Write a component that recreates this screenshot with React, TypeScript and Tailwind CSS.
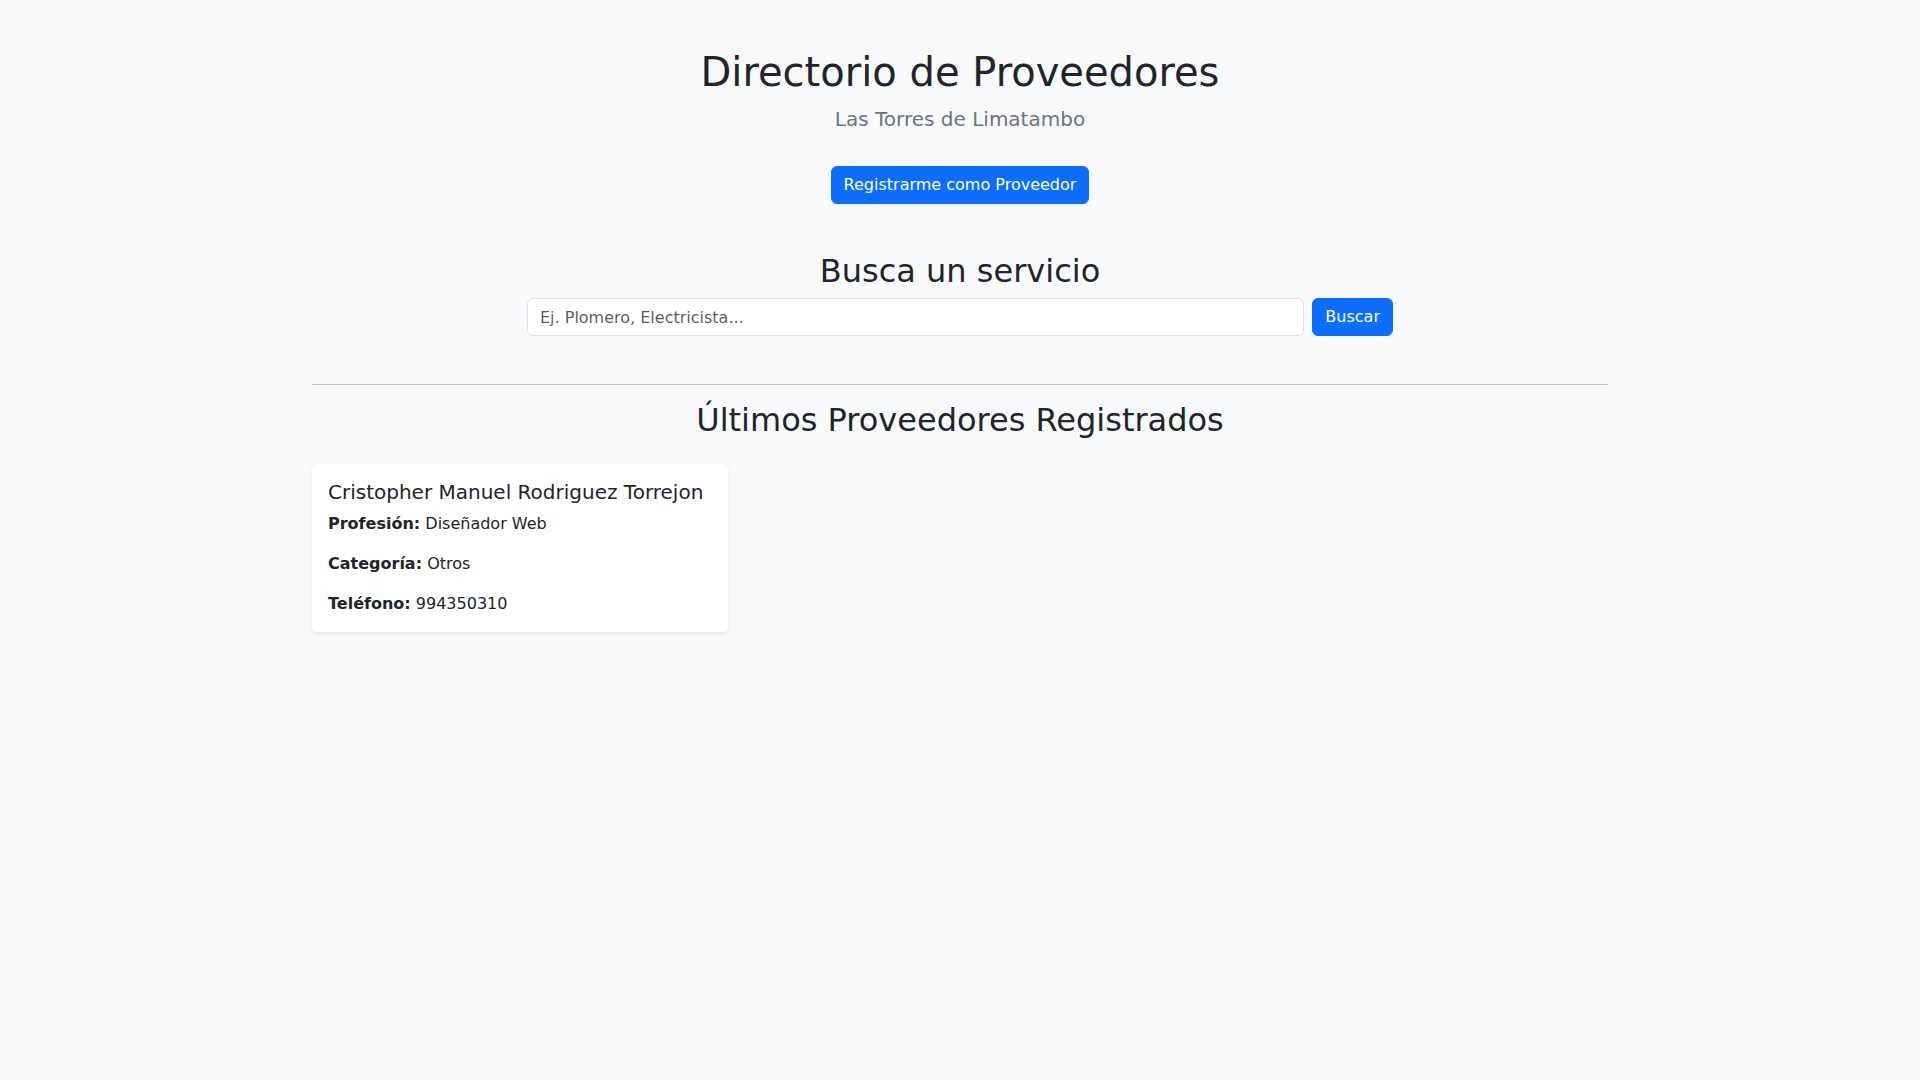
export default function App() {
  return (
    <div className="min-h-screen bg-[#f8f9fa] text-[#212529] font-['DejaVu_Sans',sans-serif] text-base leading-6">
      <div className="mx-auto max-w-[1320px] px-3 pt-12">
        <header className="text-center">
          <h1 className="text-[40px] leading-[1.2] font-medium mb-2">Directorio de Proveedores</h1>
          <p className="text-[20px] leading-[1.5] font-normal text-[#6c757d] mb-8">Las Torres de Limatambo</p>
          <button className="inline-block rounded-[6px] border border-[#0d6efd] bg-[#0d6efd] px-3 py-1.5 text-base leading-6 text-white">
            Registrarme como Proveedor
          </button>
        </header>

        <section className="mt-12 text-center">
          <h2 className="text-[32px] leading-[1.2] font-medium mb-2">Busca un servicio</h2>
          <form className="mx-auto mb-12 flex w-[866px] gap-2">
            <input
              type="text"
              placeholder="Ej. Plomero, Electricista..."
              className="h-[38px] flex-1 rounded-[6px] border border-[#dee2e6] bg-white px-3 py-1.5 text-base leading-6 outline-none placeholder:text-[#212529bf]"
            />
            <button
              type="button"
              className="h-[38px] rounded-[6px] border border-[#0d6efd] bg-[#0d6efd] px-3 text-base leading-6 text-white"
            >
              Buscar
            </button>
          </form>
        </section>

        <hr className="mb-4 border-t border-[#212529]/25" />

        <h2 className="text-center text-[32px] leading-[1.2] font-medium mb-6">Últimos Proveedores Registrados</h2>

        <div className="grid grid-cols-3 gap-6">
          <div className="rounded-[6px] bg-white p-4 shadow-[0_2px_4px_rgba(0,0,0,0.075)]">
            <h5 className="text-[20px] leading-[1.2] font-medium mb-2">Cristopher Manuel Rodriguez Torrejon</h5>
            <p className="mb-4">
              <strong className="font-bold">Profesión:</strong> Diseñador Web
            </p>
            <p className="mb-4">
              <strong className="font-bold">Categoría:</strong> Otros
            </p>
            <p>
              <strong className="font-bold">Teléfono:</strong> 994350310
            </p>
          </div>
        </div>
      </div>
    </div>
  )
}
